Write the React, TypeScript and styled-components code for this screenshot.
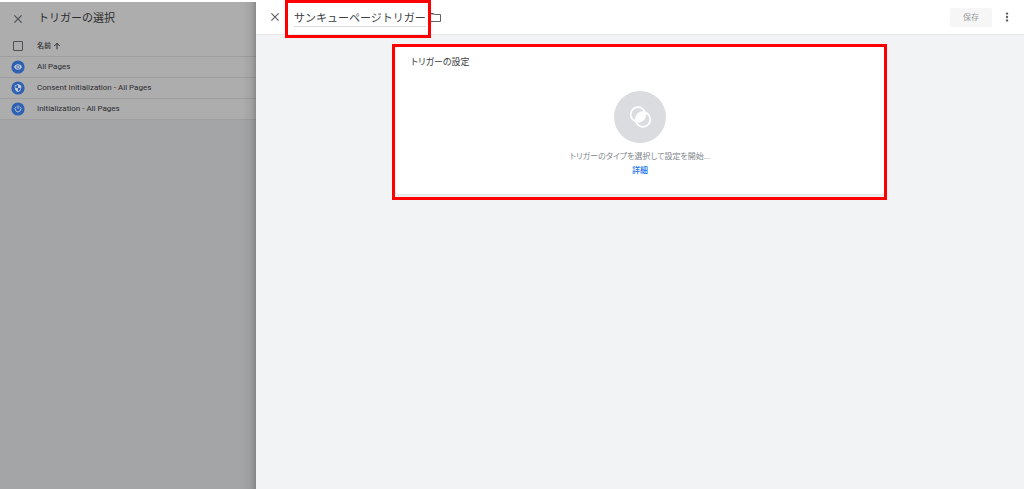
import React from "react";
import styled, { createGlobalStyle } from "styled-components";

const GlobalStyle = createGlobalStyle`
  *, *::before, *::after { box-sizing: border-box; }
  body {
    margin: 0;
    background: #fff;
    color: #3c4043;
    font-family: Roboto, "Noto Sans CJK JP", sans-serif;
    font-size: 8px;
    line-height: 12px;
  }
  button, input { font: inherit; color: inherit; }
`;

const Page = styled.div`
  display: grid;
  grid-template-columns: 1fr 3fr;
  min-height: 100vh;
`;

const Sidebar = styled.aside`
  position: relative;
  margin-top: 2px;
  background: #a4a5a6;
  color: #2b2c2e;
  &::after {
    content: "";
    position: absolute;
    inset: 0 0 0 auto;
    width: 14px;
    background: linear-gradient(to left, rgba(0, 0, 0, 0.2), rgba(0, 0, 0, 0.06) 5px, transparent);
    pointer-events: none;
  }
`;

const SidebarSheet = styled.div`
  background: #adadad;
`;

const SidebarHeader = styled.header`
  display: flex;
  align-items: center;
  gap: 15px;
  height: 33px;
  padding-left: 13px;
`;

const SidebarTitle = styled.h2`
  margin: 0;
  font-size: 11px;
  line-height: 16px;
  font-weight: 400;
`;

const IconButton = styled.button`
  display: flex;
  flex: none;
  padding: 0;
  border: 0;
  background: none;
  color: #5f6368;
  cursor: pointer;
`;

const SidebarClose = styled(IconButton)`
  color: #4c4f53;
`;

const TriggerTable = styled.table`
  width: 100%;
  border-collapse: separate;
  border-spacing: 0;
  th, td {
    height: 21px;
    padding: 0;
    border-bottom: 1px solid #9d9e9f;
    text-align: left;
    font-weight: 400;
  }
  thead > tr > * { height: 22px; }
`;

const MarkCell = styled.td`
  width: 37px;
  svg { display: block; margin-left: 11px; }
`;

const SortButton = styled.button`
  display: flex;
  align-items: center;
  gap: 2px;
  padding: 0;
  border: 0;
  background: none;
  font-size: 7px;
  font-weight: 500;
  cursor: pointer;
`;

const Checkbox = styled.input`
  display: block;
  appearance: none;
  width: 10px;
  height: 10px;
  margin: 0 0 0 13px;
  border: 1px solid #4c4f53;
  border-radius: 1px;
`;

const Editor = styled.main`
  display: flex;
  flex-direction: column;
  background: #f1f3f4;
`;

const Toolbar = styled.header`
  display: flex;
  align-items: center;
  height: 35px;
  padding: 0 12px 0 14px;
  background: #fff;
  border-bottom: 1px solid #e6e7e8;
`;

const Highlight = styled.div`
  position: relative;
  z-index: 1;
  &::after {
    content: "";
    position: absolute;
    border: 3px solid #fe0000;
    pointer-events: none;
  }
`;

const NameField = styled(Highlight)`
  margin-left: 14px;
  &::after { inset: -8px -5px -11px -9px; }
`;

const NameInput = styled.input`
  display: block;
  width: 132px;
  height: 19px;
  padding: 0;
  border: 0;
  border-bottom: 1px solid #dadce0;
  background: transparent;
  font-size: 11px;
  outline: none;
`;

const FolderButton = styled(IconButton)`
  margin-left: 3px;
`;

const SaveButton = styled.button`
  width: 42px;
  height: 19px;
  margin-left: auto;
  padding: 2px 0 0;
  border: 0;
  border-radius: 2px;
  background: #f6f6f6;
  color: #9a9c9e;
`;

const MoreButton = styled(IconButton)`
  margin-left: 10px;
`;

const Content = styled.div`
  padding: 12px 20px;
`;

const CardFrame = styled(Highlight)`
  width: 67%;
  max-width: 640px;
  margin: 0 auto;
  &::after { inset: -3px -3px -4px -4px; }
`;

const Card = styled.section`
  display: flex;
  flex-direction: column;
  min-height: 149px;
  padding: 8px 15px 16px;
  background: #fff;
  border-bottom: 2px solid #e6e8ea;
  border-radius: 3px;
  font-feature-settings: "palt";
`;

const CardTitle = styled.h3`
  margin: 0 0 22px;
  font-size: 9px;
  line-height: 14px;
  font-weight: 400;
`;

const Placeholder = styled.div`
  display: flex;
  flex-direction: column;
  align-items: center;
  color: #80868b;
`;

const Disc = styled.div`
  display: grid;
  place-items: center;
  width: 52px;
  height: 52px;
  margin-bottom: 8px;
  border-radius: 50%;
  background: #dadce0;
`;

const Hint = styled.p`
  margin: 0 0 2px;
`;

const DetailLink = styled.a`
  color: #1a73e8;
  font-weight: 500;
  text-decoration: none;
`;

const CloseIcon = () => (
  <svg width="10" height="10" viewBox="0 0 10 10" stroke="currentColor" strokeWidth="1.2">
    <path d="M1.4 1.4 8.6 8.6M8.6 1.4 1.4 8.6" />
  </svg>
);

const marks: Record<string, React.ReactNode> = {
  eye: (
    <>
      <path d="M12 4.500C7 4.500 2.700 7.600 1 12c1.700 4.400 6 7.500 11 7.500s9.300-3.100 11-7.500C21.300 7.600 17 4.500 12 4.500Z" fill="#c3c9d3" />
      <circle cx="12" cy="12" r="5" fill="#2e60b4" />
      <circle cx="12" cy="12" r="3" fill="#c3c9d3" />
    </>
  ),
  shield: (
    <>
      <path d="M12 1 3 5v6c0 5.500 3.800 10.700 9 12 5.200-1.300 9-6.500 9-12V5Z" fill="#c3c9d3" />
      <path d="M12 12h7c-.5 4.100-3.300 7.800-7 8.900ZM12 12H5V6.300l7-3.100Z" fill="#2e60b4" />
    </>
  ),
  power: (
    <path d="M12 2v10M7.500 5.300a8 8 0 1 0 9 0" fill="none" stroke="#c3c9d3" strokeWidth="2.600" />
  ),
};

const Mark = ({ kind }: { kind: string }) => (
  <svg width="14" height="14" viewBox="0 0 14 14" aria-hidden="true">
    <circle cx="7" cy="7" r="6.600" fill="#2e60b4" />
    <svg x="2.700" y="2.700" width="8.600" height="8.600" viewBox="0 0 24 24">{marks[kind]}</svg>
  </svg>
);

const triggers = [
  { name: "All Pages", kind: "eye" },
  { name: "Consent Initialization - All Pages", kind: "shield" },
  { name: "Initialization - All Pages", kind: "power" },
];

export default function App() {
  return (
    <>
      <GlobalStyle />
      <Page>
        <Sidebar>
          <SidebarSheet>
            <SidebarHeader>
              <SidebarClose aria-label="選択を閉じる"><CloseIcon /></SidebarClose>
              <SidebarTitle>トリガーの選択</SidebarTitle>
            </SidebarHeader>
            <TriggerTable>
              <thead>
                <tr>
                  <MarkCell><Checkbox type="checkbox" aria-label="すべて選択" /></MarkCell>
                  <th>
                    <SortButton>
                      名前
                      <svg width="8" height="8" viewBox="0 0 8 8" fill="none" stroke="currentColor">
                        <path d="M4 7.300V1.300M1.300 4 4 1.300 6.700 4" />
                      </svg>
                    </SortButton>
                  </th>
                </tr>
              </thead>
              <tbody>
                {triggers.map((t) => (
                  <tr key={t.name}>
                    <MarkCell><Mark kind={t.kind} /></MarkCell>
                    <td>{t.name}</td>
                  </tr>
                ))}
              </tbody>
            </TriggerTable>
          </SidebarSheet>
        </Sidebar>
        <Editor>
          <Toolbar>
            <IconButton aria-label="閉じる"><CloseIcon /></IconButton>
            <NameField>
              <NameInput aria-label="トリガー名" defaultValue="サンキューページトリガー" />
            </NameField>
            <FolderButton aria-label="フォルダ">
              <svg width="12" height="10" viewBox="0 0 12 10" fill="none" stroke="currentColor">
                <path d="M1 1.500h3.600l1 1H11.500v7H1Z" />
                <path d="M1 2h4.300" />
              </svg>
            </FolderButton>
            <SaveButton disabled>保存</SaveButton>
            <MoreButton aria-label="その他">
              <svg width="10" height="10" viewBox="0 0 10 10" fill="currentColor">
                <circle cx="5" cy="1.600" r="1.200" />
                <circle cx="5" cy="5" r="1.200" />
                <circle cx="5" cy="8.400" r="1.200" />
              </svg>
            </MoreButton>
          </Toolbar>
          <Content>
            <CardFrame>
              <Card>
                <CardTitle>トリガーの設定</CardTitle>
                <Placeholder>
                  <Disc>
                    <svg width="24" height="24" viewBox="0 0 24 24">
                      <defs>
                        <clipPath id="lens"><circle cx="10" cy="9.500" r="7.300" /></clipPath>
                      </defs>
                      <circle cx="15" cy="14.500" r="7.300" fill="#fff" clipPath="url(#lens)" />
                      <circle cx="10" cy="9.500" r="7.300" fill="none" stroke="#fff" strokeWidth="1.700" />
                      <circle cx="15" cy="14.500" r="7.300" fill="none" stroke="#fff" strokeWidth="1.700" />
                    </svg>
                  </Disc>
                  <Hint>トリガーのタイプを選択して設定を開始...</Hint>
                  <DetailLink href="#">詳細</DetailLink>
                </Placeholder>
              </Card>
            </CardFrame>
          </Content>
        </Editor>
      </Page>
    </>
  );
}
